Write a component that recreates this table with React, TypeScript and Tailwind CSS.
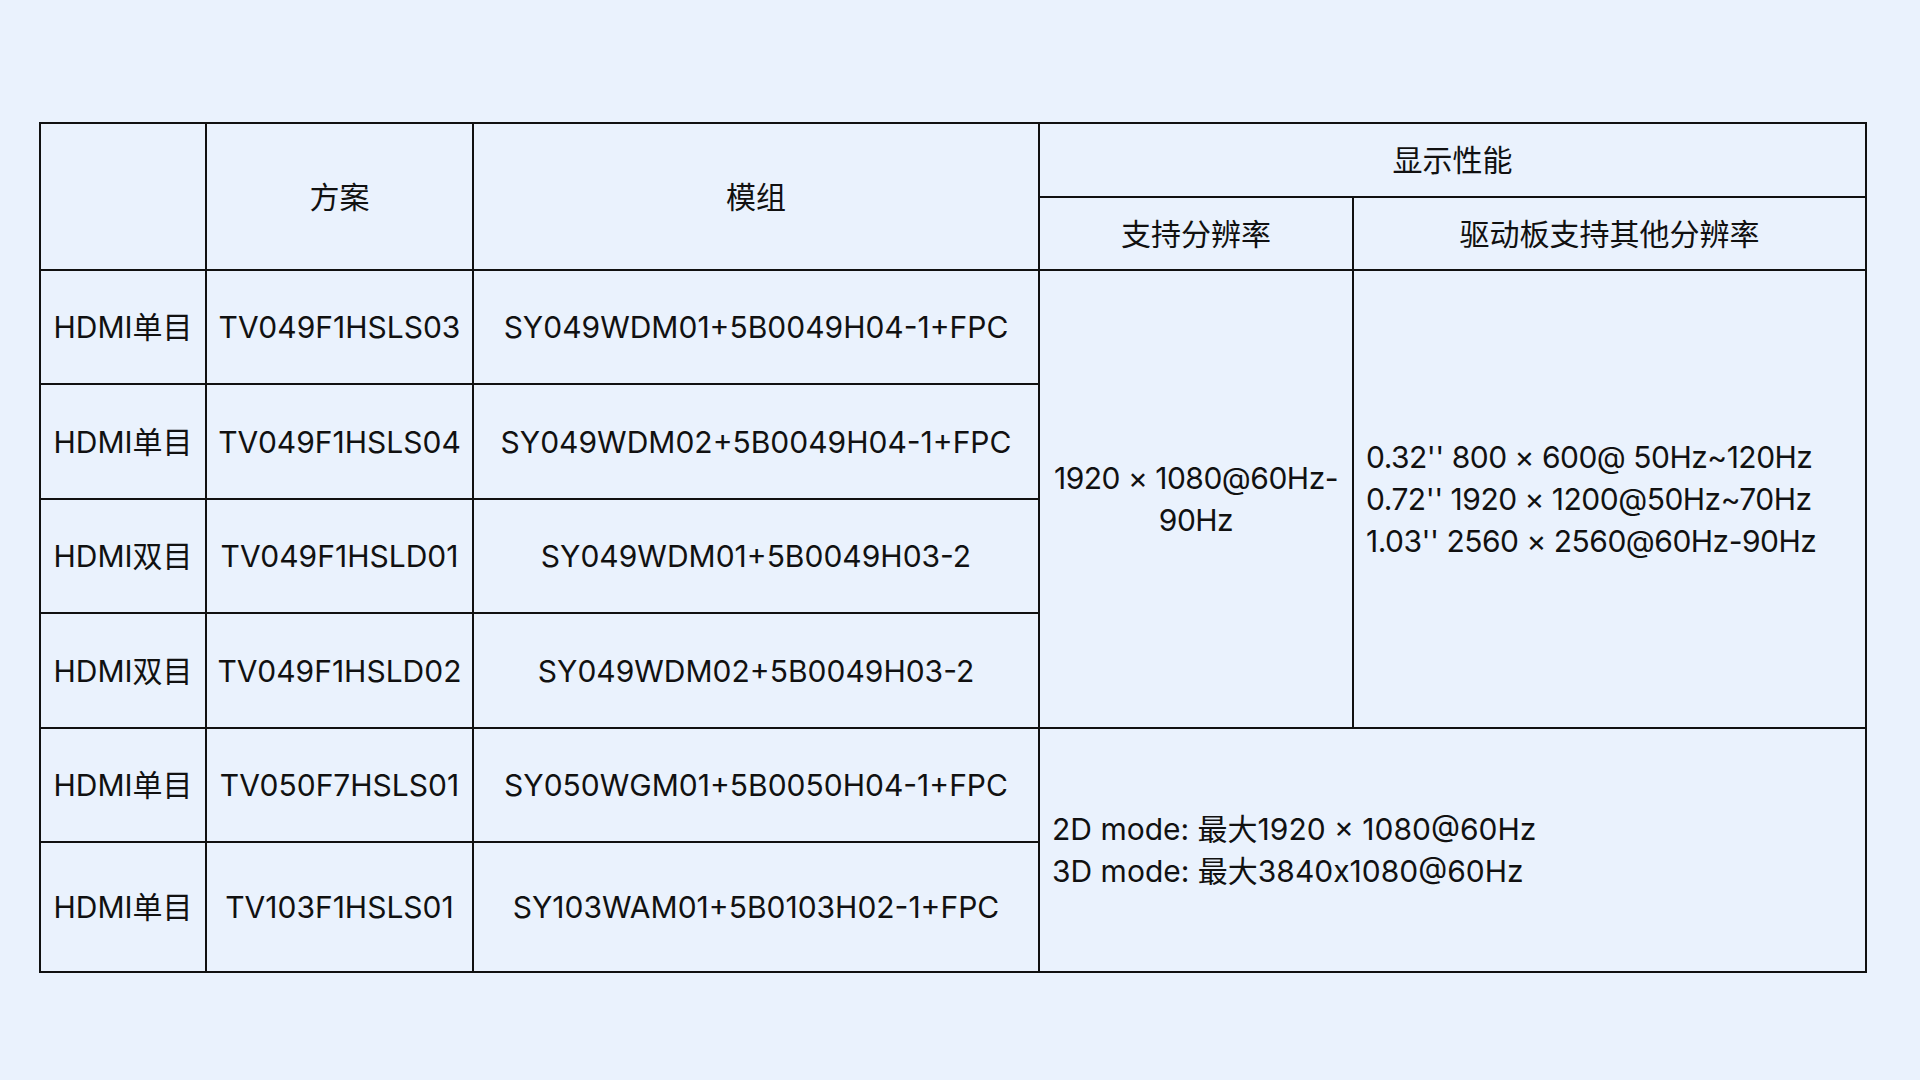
import React from "react";

const font = { fontFamily: 'Inter, "Noto Sans CJK SC", sans-serif' };

const rows1 = [
  ["HDMI单目", "TV049F1HSLS03", "SY049WDM01+5B0049H04-1+FPC", "h-[114px]"],
  ["HDMI单目", "TV049F1HSLS04", "SY049WDM02+5B0049H04-1+FPC", "h-[115px]"],
  ["HDMI双目", "TV049F1HSLD01", "SY049WDM01+5B0049H03-2", "h-[114px]"],
  ["HDMI双目", "TV049F1HSLD02", "SY049WDM02+5B0049H03-2", "h-[115px]"],
];

export default function App() {
  const cell = "border-2 border-[#111] text-center align-middle p-0";
  return (
    <div
      className="min-h-screen w-full bg-[#eaf2fd] pt-[122px] pl-[39px] text-[#111] text-[30px] leading-[42px]"
      style={font}
    >
      <table className="table-fixed border-collapse w-[1826px]">
        <colgroup>
          <col className="w-[166px]" />
          <col className="w-[267px]" />
          <col className="w-[566px]" />
          <col className="w-[314px]" />
          <col className="w-[513px]" />
        </colgroup>
        <thead>
          <tr className="h-[74px]">
            <th rowSpan={2} className={cell + " font-normal"}></th>
            <th rowSpan={2} className={cell + " font-normal"}>方案</th>
            <th rowSpan={2} className={cell + " font-normal"}>模组</th>
            <th colSpan={2} className={cell + " font-normal"}>显示性能</th>
          </tr>
          <tr className="h-[73px]">
            <th className={cell + " font-normal"}>支持分辨率</th>
            <th className={cell + " font-normal"}>驱动板支持其他分辨率</th>
          </tr>
        </thead>
        <tbody>
          {rows1.map((r, i) => (
            <tr key={i} className={r[3]}>
              <td className={cell + " whitespace-nowrap"}>{r[0]}</td>
              <td className={cell + " whitespace-nowrap"}>{r[1]}</td>
              <td className={cell + " whitespace-nowrap"}>{r[2]}</td>
              {i === 0 && (
                <>
                  <td rowSpan={4} className={cell + " px-[12px] tracking-[-0.5px]"}>
                    1920 × 1080@60Hz-
                    <br />
                    90Hz
                  </td>
                  <td rowSpan={4} className={cell + " text-left px-[12px] tracking-[-0.5px]"}>
                    <div>0.32'' 800 × 600@ 50Hz~120Hz</div>
                    <div>0.72'' 1920 × 1200@50Hz~70Hz</div>
                    <div>1.03'' 2560 × 2560@60Hz-90Hz</div>
                  </td>
                </>
              )}
            </tr>
          ))}
          <tr className="h-[114px]">
            <td className={cell + " whitespace-nowrap"}>HDMI单目</td>
            <td className={cell + " whitespace-nowrap"}>TV050F7HSLS01</td>
            <td className={cell + " whitespace-nowrap"}>SY050WGM01+5B0050H04-1+FPC</td>
            <td rowSpan={2} colSpan={2} className={cell + " text-left px-[12px]"}>
              <div>2D mode: 最大1920 × 1080@60Hz</div>
              <div>3D mode: 最大3840x1080@60Hz</div>
            </td>
          </tr>
          <tr className="h-[130px]">
            <td className={cell + " whitespace-nowrap"}>HDMI单目</td>
            <td className={cell + " whitespace-nowrap"}>TV103F1HSLS01</td>
            <td className={cell + " whitespace-nowrap"}>SY103WAM01+5B0103H02-1+FPC</td>
          </tr>
        </tbody>
      </table>
    </div>
  );
}
